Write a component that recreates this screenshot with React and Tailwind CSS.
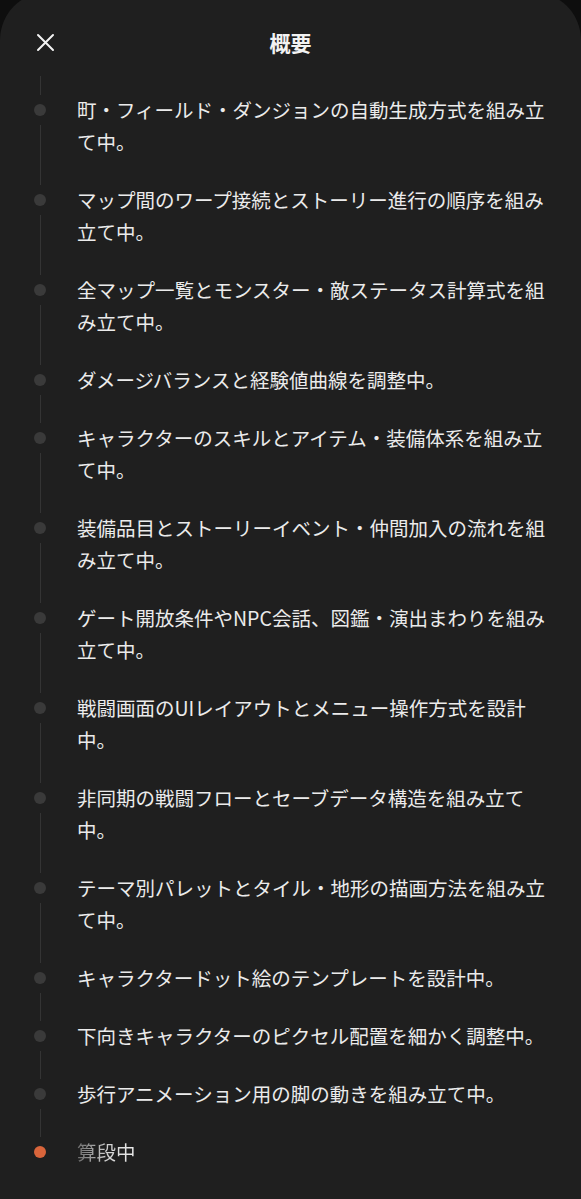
import React from 'react';

const steps = [
  '町・フィールド・ダンジョンの自動生成方式を組み立て中。',
  'マップ間のワープ接続とストーリー進行の順序を組み立て中。',
  '全マップ一覧とモンスター・敵ステータス計算式を組み立て中。',
  'ダメージバランスと経験値曲線を調整中。',
  'キャラクターのスキルとアイテム・装備体系を組み立て中。',
  '装備品目とストーリーイベント・仲間加入の流れを組み立て中。',
  'ゲート開放条件やNPC会話、図鑑・演出まわりを組み立て中。',
  '戦闘画面のUIレイアウトとメニュー操作方式を設計中。',
  '非同期の戦闘フローとセーブデータ構造を組み立て中。',
  'テーマ別パレットとタイル・地形の描画方法を組み立て中。',
  'キャラクタードット絵のテンプレートを設計中。',
  '下向きキャラクターのピクセル配置を細かく調整中。',
  '歩行アニメーション用の脚の動きを組み立て中。',
];

// timeline row: rail on the left (line / dot / line), text on the right
const Step = ({ text, first, last, active }) => (
  <div className="flex">
    <div className="flex w-[80px] shrink-0 flex-col items-center">
      <div className={'w-px bg-[#343434] ' + (first ? '-mt-[5px] h-[19px]' : 'h-[14px]')} />
      <div className={'mt-[9px] h-3 w-3 rounded-full ' + (active ? 'bg-[#d9653b]' : 'bg-[#3a3a3a]')} />
      {!last && <div className="mt-[9px] w-px flex-1 bg-[#343434]" />}
    </div>
    <div className="-ml-[3px] w-[470px] py-[13px] text-[19.5px] leading-[32px] text-[#ebebeb]">
      {active ? (
        <span className="bg-gradient-to-r from-[#6a6a6a] via-[#d0d0d0] to-[#ededed] bg-clip-text text-transparent">
          {text}
        </span>
      ) : (
        text
      )}
    </div>
  </div>
);

export default function App() {
  return (
    <div
      className="min-h-[1199px] overflow-hidden bg-[#0e0e0e]"
      style={{ fontFamily: '"Noto Sans CJK JP", "Noto Sans", sans-serif' }}
    >
      <div className="-mt-2 min-h-[1207px] rounded-t-[48px] bg-[#1f1f1f] pt-2">
        <div className="relative flex h-[81px] items-center justify-center pt-[5px]">
          <button className="absolute left-[36px] top-[33px] text-[#f2f2f2]">
            <svg width="19" height="19" viewBox="0 0 19 19" fill="none" stroke="currentColor" strokeWidth="2" strokeLinecap="round">
              <path d="M2 2L17 17M17 2L2 17" />
            </svg>
          </button>
          <h1 className="text-[21px] font-bold text-[#f2f2f2]">概要</h1>
        </div>
        <div className="flex flex-col">
          {steps.map((s, i) => (
            <Step key={i} text={s} first={i === 0} />
          ))}
          <Step text="算段中" last active />
        </div>
      </div>
    </div>
  );
}
